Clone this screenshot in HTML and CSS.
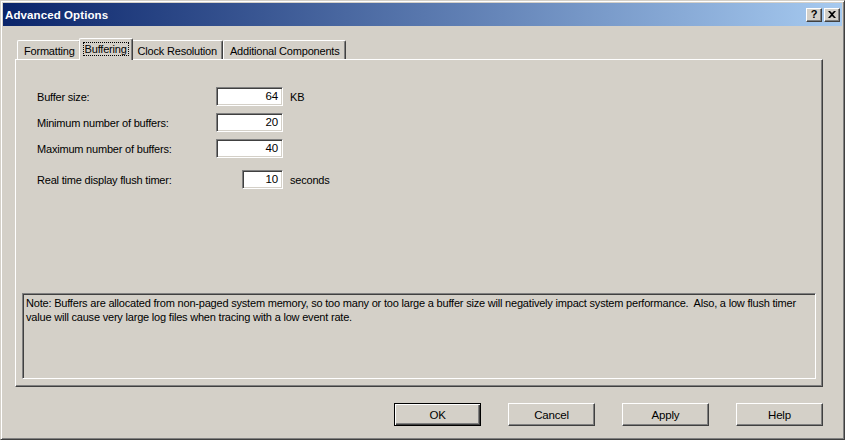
FILE: index.html
```html
<!DOCTYPE html>
<html>
<head>
<meta charset="utf-8">
<link rel="stylesheet" href="styles.css">
</head>
<body>
<div class="window">
  <div class="titlebar">
    <span class="title">Advanced Options</span>
    <div class="caption-buttons">
      <span class="cap-btn">?</span>
      <span class="cap-btn cap-close">
        <svg width="8" height="7" viewBox="0 0 8 7"><path d="M0 0h2l2 2 2-2h2L5 3.5 8 7H6L4 5 2 7H0l3-3.5z" fill="#000"/></svg>
      </span>
    </div>
  </div>
  <div class="content">
    <div class="tabs">
      <div class="tab">Formatting</div>
      <div class="tab tab-active"><span class="focus">Buffering</span></div>
      <div class="tab">Clock Resolution</div>
      <div class="tab">Additional Components</div>
    </div>
    <div class="panel">
      <div class="form">
        <label class="lbl">Buffer size:</label>
        <div class="field wide">64</div>
        <span class="unit">KB</span>
        <label class="lbl">Minimum number of buffers:</label>
        <div class="field wide">20</div>
        <span class="unit"></span>
        <label class="lbl">Maximum number of buffers:</label>
        <div class="field wide">40</div>
        <span class="unit"></span>
        <label class="lbl row-gap">Real time display flush timer:</label>
        <div class="field narrow row-gap">10</div>
        <span class="unit row-gap">seconds</span>
      </div>
      <div class="note">Note: Buffers are allocated from non-paged system memory, so too many or too large a buffer size will negatively impact system performance.&nbsp; Also, a low flush timer value will cause very large log files when tracing with a low event rate.</div>
    </div>
    <div class="buttons">
      <div class="btn btn-default"><span>OK</span></div>
      <div class="btn"><span>Cancel</span></div>
      <div class="btn"><span>Apply</span></div>
      <div class="btn"><span>Help</span></div>
    </div>
  </div>
</div>
</body>
</html>
```

FILE: styles.css
```css
html, body {
  margin: 0;
  padding: 0;
  background: #ffffff;
}
body {
  font-family: "Liberation Sans", Arial, sans-serif;
  font-size: 11px;
  letter-spacing: -0.2px;
  color: #000;
}
.window {
  width: 845px;
  height: 440px;
  box-sizing: border-box;
  background: #d4d0c8;
  border-top: 1px solid #d4d0c8;
  border-left: 1px solid #d4d0c8;
  border-right: 1px solid #404040;
  border-bottom: 1px solid #404040;
  box-shadow: inset 1px 1px 0 #fff, inset -1px -1px 0 #808080;
  padding: 2px;
  display: flex;
  flex-direction: column;
}
.titlebar {
  height: 23px;
  background: linear-gradient(to right, #0a246a, #a6caf0);
  display: flex;
  align-items: center;
  justify-content: space-between;
  padding: 0 2px 0 2px;
}
.title {
  color: #fff;
  font-weight: bold;
  font-size: 11.5px;
  letter-spacing: 0.1px;
}
.caption-buttons {
  display: flex;
  gap: 2px;
}
.cap-btn {
  width: 16px;
  height: 14px;
  box-sizing: border-box;
  background: #d4d0c8;
  border-top: 1px solid #fff;
  border-left: 1px solid #fff;
  border-right: 1px solid #404040;
  border-bottom: 1px solid #404040;
  box-shadow: inset -1px -1px 0 #808080;
  display: flex;
  align-items: center;
  justify-content: center;
  font-weight: bold;
  font-size: 11px;
  line-height: 1;
  letter-spacing: 0;
}
.content {
  flex: 1;
  display: flex;
  flex-direction: column;
  padding: 12px 19px 10px 12px;
}
.tabs {
  display: flex;
  align-items: flex-end;
  height: 22px;
  padding-left: 2px;
  position: relative;
  z-index: 1;
  margin-bottom: -1px;
}
.tab {
  height: 19px;
  box-sizing: border-box;
  padding: 2px 5px 0 6px;
  border-top: 1px solid #fff;
  border-left: 1px solid #fff;
  border-right: 1px solid #404040;
  box-shadow: inset -1px 0 0 #808080;
  border-radius: 2px 2px 0 0;
  display: flex;
  align-items: center;
  margin-bottom: 1px;
  white-space: nowrap;
}
.tab-active {
  height: 22px;
  margin: 0 -2px 0 -2px;
  padding: 0 4px 1px 4px;
  background: #d4d0c8;
  position: relative;
  z-index: 2;
  margin-bottom: 0;
}
.tab-active + .tab {
  border-left: none;
  padding-left: 7px;
}
.focus {
  outline: 1px dotted #000;
  padding: 0 1px;
}
.panel {
  height: 328px;
  box-sizing: border-box;
  border-top: 1px solid #fff;
  border-left: 1px solid #fff;
  border-right: 1px solid #404040;
  border-bottom: 1px solid #404040;
  box-shadow: inset -1px -1px 0 #808080;
  display: flex;
  flex-direction: column;
  justify-content: space-between;
  padding: 27px 6px 7px 6px;
}
.form {
  display: grid;
  grid-template-columns: 179px 67px auto;
  grid-auto-rows: 19px;
  row-gap: 7px;
  align-items: center;
  padding-left: 15px;
}
.lbl {
  white-space: nowrap;
}
.unit {
  padding-left: 7px;
}
.row-gap {
  margin-top: 10px;
}
.field {
  height: 19px;
  box-sizing: border-box;
  background: #fff;
  border-top: 1px solid #808080;
  border-left: 1px solid #808080;
  border-right: 1px solid #fff;
  border-bottom: 1px solid #fff;
  box-shadow: inset 1px 1px 0 #404040, inset -1px -1px 0 #d4d0c8;
  text-align: right;
  padding-right: 4px;
  line-height: 17px;
  font-size: 11.5px;
  justify-self: end;
}
.wide { width: 67px; }
.narrow { width: 41px; }
.note {
  height: 86px;
  box-sizing: border-box;
  border-top: 1px solid #808080;
  border-left: 1px solid #808080;
  border-right: 1px solid #fff;
  border-bottom: 1px solid #fff;
  box-shadow: inset 1px 1px 0 #404040, inset -1px -1px 0 #d4d0c8;
  padding: 2px 3px;
  line-height: 14px;
}
.buttons {
  margin-top: 16px;
  display: flex;
  justify-content: flex-end;
  gap: 27px;
}
.btn {
  width: 87px;
  height: 23px;
  box-sizing: border-box;
  border-top: 1px solid #fff;
  border-left: 1px solid #fff;
  border-right: 1px solid #404040;
  border-bottom: 1px solid #404040;
  box-shadow: inset -1px -1px 0 #808080;
  display: flex;
  align-items: center;
  justify-content: center;
  font-size: 11.5px;
}
.btn-default {
  border: 1px solid #000;
  box-shadow: inset 1px 1px 0 #fff, inset -1px -1px 0 #404040, inset -2px -2px 0 #808080;
}
```
